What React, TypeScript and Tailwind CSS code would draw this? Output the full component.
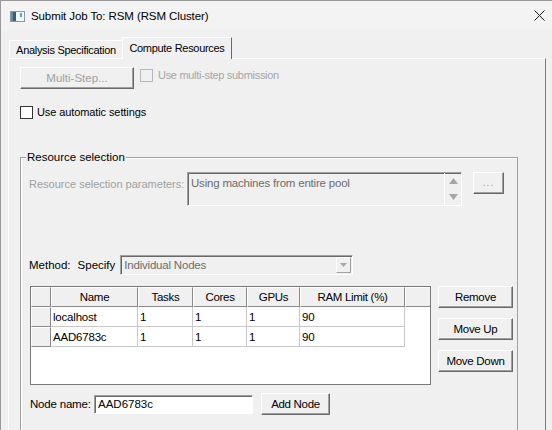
import React from "react";

const raised =
  "border border-t-white border-l-white border-r-[#696969] border-b-[#696969] shadow-[inset_-1px_-1px_0_#a0a0a0] bg-[#f0f0f0]";
const sunken =
  "border border-t-[#a0a0a0] border-l-[#a0a0a0] border-r-white border-b-white shadow-[inset_1px_1px_0_#696969]";

const cols = [
  { label: "", w: "w-[20px]" },
  { label: "Name", w: "w-[87px]" },
  { label: "Tasks", w: "w-[55px]" },
  { label: "Cores", w: "w-[54px]" },
  { label: "GPUs", w: "w-[53px]" },
  { label: "RAM Limit (%)", w: "w-[105px]" },
];

const rows = [
  ["localhost", "1", "1", "1", "90"],
  ["AAD6783c", "1", "1", "1", "90"],
];

const Button = ({ label, className }: { label: string; className: string }) => (
  <div className={`${raised} flex items-center justify-center text-[11.5px] tracking-[-0.3px] text-black ${className}`}>{label}</div>
);

const NodeTable = () => (
  <div className="w-[401px] h-[99px] border border-[#7a7a7a] bg-white">
    <div className="flex h-[20px]">
      {cols.map((c, i) => (
        <div
          key={i}
          className={`${c.w} h-[20px] bg-[#f0f0f0] border-t border-l border-t-white border-l-white border-r border-b border-r-[#8a8a8a] border-b-[#8a8a8a] flex items-center justify-center text-[11.5px] tracking-[-0.3px] text-black`}
        >
          {c.label}
        </div>
      ))}
      <div className="w-[25px] h-[20px] bg-[#f0f0f0] border-t border-l border-t-white border-l-white border-b border-b-[#8a8a8a]" />
    </div>
    {rows.map((r, i) => (
      <div key={i} className="flex h-[20px]">
        <div className="w-[20px] h-[20px] bg-[#f0f0f0] border-t border-l border-t-white border-l-white border-r border-b border-r-[#8a8a8a] border-b-[#8a8a8a]" />
        {r.map((v, j) => (
          <div
            key={j}
            className={`${cols[j + 1].w} h-[20px] border-r border-b border-[#c8c8c8] flex items-center pl-[2px] text-[11.5px] tracking-[-0.2px] text-black`}
          >
            {v}
          </div>
        ))}
      </div>
    ))}
  </div>
);

export default function App() {
  return (
    <div className="w-[552px] h-[430px] overflow-hidden bg-[#f0f0f0] border-l border-t border-[#9a9a9a] font-['Liberation_Sans',Arial,sans-serif] leading-[14px] text-black">
      {/* title bar */}
      <div className="h-[29px] bg-[#f3f3f3] flex items-center pl-[9px] pr-[7px]">
        <svg width="15" height="11" viewBox="0 0 15 11" className="mt-[1px]">
          <rect x="0.5" y="0.5" width="14" height="10" fill="#f4f6f8" stroke="#8a98a6" />
          <rect x="1" y="1" width="5" height="9" fill="#3d5f6f" />
          <rect x="1" y="1" width="2" height="9" fill="#6f8b99" />
          <rect x="10" y="2" width="2" height="4" fill="#58a6b8" />
        </svg>
        <span className="ml-[6px] text-[11.5px] tracking-[-0.1px]">Submit Job To: RSM (RSM Cluster)</span>
        <svg width="11" height="11" viewBox="0 0 11 11" className="ml-auto">
          <path d="M0.5 0.5 L10.5 10.5 M10.5 0.5 L0.5 10.5" stroke="#1a1a1a" strokeWidth="1" />
        </svg>
      </div>

      {/* tabs */}
      <div className="ml-[8px] h-[28px] flex items-end">
        <div className="h-[18px] w-[113px] border-t border-l border-white flex items-center justify-center text-[11px] tracking-[-0.3px]">
          Analysis Specification
        </div>
        <div className="relative z-10 -mb-[1px] h-[22px] w-[110px] bg-[#f0f0f0] border-t border-l border-white border-r border-r-[#696969] flex items-center justify-center pb-[2px] text-[11px] tracking-[-0.3px]">
          Compute Resources
        </div>
      </div>

      {/* panel */}
      <div className="ml-[7px] w-[538px] h-[400px] border-t border-l border-white border-r border-r-[#7a7a7a]">
        <div className="mt-[8px] ml-[11px] flex items-start">
          <div className={`${raised} w-[114px] h-[22px] flex items-center justify-center text-[11.5px] text-[#a0a0a0]`}>
            Multi-Step...
          </div>
          <div className="ml-[6px] mt-[2px] w-[13px] h-[13px] border border-[#b5b5b5] bg-[#f0f0f0]" />
          <span className="ml-[5px] mt-[1px] text-[11px] tracking-[-0.3px] text-[#a6a6a6]">Use multi-step submission</span>
        </div>

        <div className="mt-[16px] ml-[11px] flex items-center">
          <div className="w-[13px] h-[13px] border border-[#333] bg-white" />
          <span className="ml-[4px] text-[11px] tracking-[-0.1px]">Use automatic settings</span>
        </div>

        {/* group box */}
        <div className="relative mt-[38px] ml-[11px] w-[498px] border border-[#a0a0a0] shadow-[inset_1px_1px_0_white] pl-[8px] pb-[40px]">
          <span className="absolute -top-[8px] left-[5px] bg-[#f0f0f0] px-[1px] text-[11.5px] leading-[14px]">
            Resource selection
          </span>

          <div className="mt-[14px] flex items-start">
            <div className="w-[158px] pt-[5px] whitespace-nowrap text-[11px] text-[#a0a0a0]">Resource selection parameters:</div>
            <div className={`${sunken} w-[275px] h-[34px] bg-[#f0f0f0] flex`}>
              <div className="flex-1 pl-[3px] pt-[3px] text-[11.5px] tracking-[-0.2px] text-[#6d6d6d]">Using machines from entire pool</div>
              <div className="w-[17px] border-l border-white flex flex-col items-center justify-between py-[5px]">
                <svg width="9" height="6" viewBox="0 0 9 6">
                  <path d="M4.5 0 L9 6 L0 6 Z" fill="#a6a6a6" />
                </svg>
                <svg width="9" height="6" viewBox="0 0 9 6">
                  <path d="M0 0 L9 0 L4.5 6 Z" fill="#a6a6a6" />
                </svg>
              </div>
            </div>
            <div className={`${raised} ml-[11px] w-[31px] h-[22px] flex items-center justify-center text-[10px] text-[#a0a0a0] tracking-[1px]`}>
              ...
            </div>
          </div>

          <div className="mt-[49px] flex items-center">
            <span className="text-[11.5px]">Method:</span>
            <span className="ml-[7px] text-[11.5px]">Specify</span>
            <div className={`${sunken} ml-[5px] w-[233px] h-[20px] bg-[#f0f0f0] flex items-center`}>
              <span className="flex-1 pl-[3px] text-[11.5px] tracking-[-0.2px] text-[#6d6d6d]">Individual Nodes</span>
              <div className="w-[15px] h-[16px] mr-[1px] border border-t-white border-l-white border-r-[#a0a0a0] border-b-[#a0a0a0] flex items-center justify-center">
                <svg width="7" height="4" viewBox="0 0 7 4">
                  <path d="M0 0 L7 0 L3.5 4 Z" fill="#a6a6a6" />
                </svg>
              </div>
            </div>
          </div>

          <div className="mt-[11px] ml-[1px] flex items-start">
            <NodeTable />
            <div className="ml-[7px] flex flex-col gap-[10px]">
              <Button label="Remove" className="w-[75px] h-[22px]" />
              <Button label="Move Up" className="w-[75px] h-[22px]" />
              <Button label="Move Down" className="w-[75px] h-[22px]" />
            </div>
          </div>

          <div className="mt-[8px] ml-[1px] flex items-center">
            <span className="w-[64px] text-[11.5px] tracking-[-0.2px] whitespace-nowrap">Node name:</span>
            <div className={`${sunken} w-[159px] h-[19px] bg-white flex items-center pl-[3px] text-[11.5px]`}>
              AAD6783c
            </div>
            <Button label="Add Node" className="ml-[8px] w-[69px] h-[22px]" />
          </div>
        </div>
      </div>
    </div>
  );
}
